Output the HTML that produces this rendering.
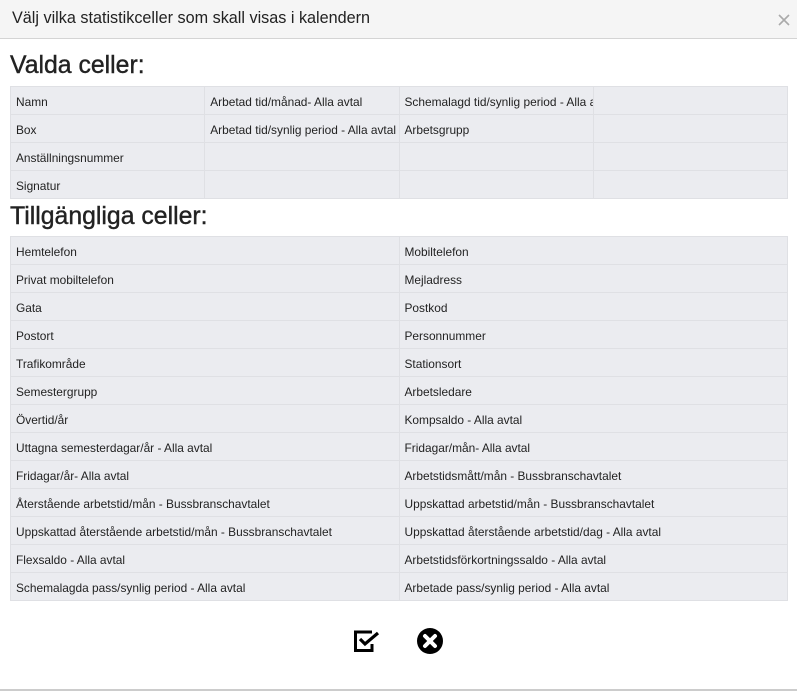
<!DOCTYPE html>
<html><head><meta charset="utf-8"><style>
body{margin:0;width:797px;height:691px;background:#fff;font-family:"Liberation Sans",sans-serif;color:#222;position:relative;overflow:hidden}
.hdr{position:absolute;left:0;top:0;width:797px;height:38px;background:#f5f5f5;border-bottom:1px solid #d4d4d4}
.hdr .t{position:absolute;left:12px;top:9px;font-size:16.2px;color:#222}
.hdr .x{position:absolute;left:777px;top:13px;width:14px;height:14px}
h2{position:absolute;left:10px;margin:0;font-size:24.8px;font-weight:normal;color:#222;-webkit-text-stroke:0.4px #222}
table{position:absolute;left:10px;border-collapse:collapse;table-layout:fixed;width:778px}
td{background:#ebecf0;border:1px solid #dfe0e4;height:27px;padding:3px 0 0 5px;box-sizing:border-box;font-size:11.9px;color:#222;white-space:nowrap;overflow:hidden;text-overflow:clip}
tr{height:28px}
.bot{position:absolute;left:0;top:689px;width:797px;height:2px;background:#ccc}
</style></head><body>
<div class="hdr"><div class="t">Välj vilka statistikceller som skall visas i kalendern</div>
<svg class="x" viewBox="0 0 14 14"><path d="M2 2L12 12M12 2L2 12" stroke="#aaa" stroke-width="1.6"/></svg></div>
<h2 style="top:52px">Valda celler:</h2>
<table style="top:86px"><tr><td>Namn</td><td>Arbetad tid/månad- Alla avtal</td><td>Schemalagd tid/synlig period - Alla avtal</td><td></td></tr>
<tr><td>Box</td><td>Arbetad tid/synlig period - Alla avtal</td><td>Arbetsgrupp</td><td></td></tr>
<tr><td>Anställningsnummer</td><td></td><td></td><td></td></tr>
<tr><td>Signatur</td><td></td><td></td><td></td></tr></table>
<h2 style="top:203px">Tillgängliga celler:</h2>
<table style="top:236px">
<tr><td>Hemtelefon</td><td>Mobiltelefon</td></tr>
<tr><td>Privat mobiltelefon</td><td>Mejladress</td></tr>
<tr><td>Gata</td><td>Postkod</td></tr>
<tr><td>Postort</td><td>Personnummer</td></tr>
<tr><td>Trafikområde</td><td>Stationsort</td></tr>
<tr><td>Semestergrupp</td><td>Arbetsledare</td></tr>
<tr><td>Övertid/år</td><td>Kompsaldo - Alla avtal</td></tr>
<tr><td>Uttagna semesterdagar/år - Alla avtal</td><td>Fridagar/mån- Alla avtal</td></tr>
<tr><td>Fridagar/år- Alla avtal</td><td>Arbetstidsmått/mån - Bussbranschavtalet</td></tr>
<tr><td>Återstående arbetstid/mån - Bussbranschavtalet</td><td>Uppskattad arbetstid/mån - Bussbranschavtalet</td></tr>
<tr><td>Uppskattad återstående arbetstid/mån - Bussbranschavtalet</td><td>Uppskattad återstående arbetstid/dag - Alla avtal</td></tr>
<tr><td>Flexsaldo - Alla avtal</td><td>Arbetstidsförkortningssaldo - Alla avtal</td></tr>
<tr><td>Schemalagda pass/synlig period - Alla avtal</td><td>Arbetade pass/synlig period - Alla avtal</td></tr>
</table>
<svg style="position:absolute;left:353px;top:629px" width="28" height="24" viewBox="0 0 28 24">
<path d="M19 3H2.5V21.5H19V15" fill="none" stroke="#000" stroke-width="3"/>
<path d="M7 10L12 15L25 4" fill="none" stroke="#000" stroke-width="3.2"/></svg>
<svg style="position:absolute;left:416px;top:627px" width="28" height="28" viewBox="0 0 28 28">
<circle cx="14" cy="14" r="13" fill="#000"/>
<path d="M9 9L19 19M19 9L9 19" stroke="#fff" stroke-width="4" stroke-linecap="round"/></svg>
<div class="bot"></div>
</body></html>
